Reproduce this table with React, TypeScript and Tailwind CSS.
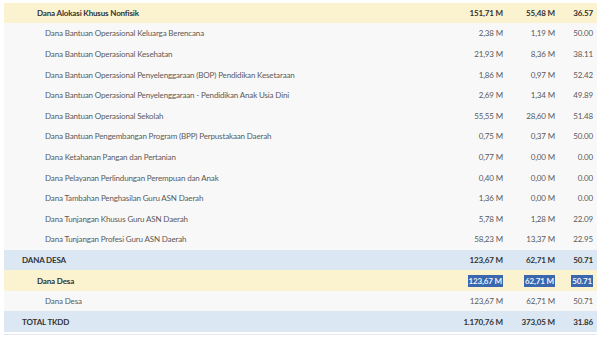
type Row = {
  name: string
  a: string
  b: string
  c: string
  kind: 'group' | 'sub' | 'item'
  selected?: boolean
}

const rows: Row[] = [
  { name: 'Dana Alokasi Khusus Nonfisik', a: '151,71 M', b: '55,48 M', c: '36.57', kind: 'sub' },
  { name: 'Dana Bantuan Operasional Keluarga Berencana', a: '2,38 M', b: '1,19 M', c: '50.00', kind: 'item' },
  { name: 'Dana Bantuan Operasional Kesehatan', a: '21,93 M', b: '8,36 M', c: '38.11', kind: 'item' },
  { name: 'Dana Bantuan Operasional Penyelenggaraan (BOP) Pendidikan Kesetaraan', a: '1,86 M', b: '0,97 M', c: '52.42', kind: 'item' },
  { name: 'Dana Bantuan Operasional Penyelenggaraan - Pendidikan Anak Usia Dini', a: '2,69 M', b: '1,34 M', c: '49.89', kind: 'item' },
  { name: 'Dana Bantuan Operasional Sekolah', a: '55,55 M', b: '28,60 M', c: '51.48', kind: 'item' },
  { name: 'Dana Bantuan Pengembangan Program (BPP) Perpustakaan Daerah', a: '0,75 M', b: '0,37 M', c: '50.00', kind: 'item' },
  { name: 'Dana Ketahanan Pangan dan Pertanian', a: '0,77 M', b: '0,00 M', c: '0.00', kind: 'item' },
  { name: 'Dana Pelayanan Perlindungan Perempuan dan Anak', a: '0,40 M', b: '0,00 M', c: '0.00', kind: 'item' },
  { name: 'Dana Tambahan Penghasilan Guru ASN Daerah', a: '1,36 M', b: '0,00 M', c: '0.00', kind: 'item' },
  { name: 'Dana Tunjangan Khusus Guru ASN Daerah', a: '5,78 M', b: '1,28 M', c: '22.09', kind: 'item' },
  { name: 'Dana Tunjangan Profesi Guru ASN Daerah', a: '58,23 M', b: '13,37 M', c: '22.95', kind: 'item' },
  { name: 'DANA DESA', a: '123,67 M', b: '62,71 M', c: '50.71', kind: 'group' },
  { name: 'Dana Desa', a: '123,67 M', b: '62,71 M', c: '50.71', kind: 'sub', selected: true },
  { name: 'Dana Desa', a: '123,67 M', b: '62,71 M', c: '50.71', kind: 'item' },
  { name: 'TOTAL TKDD', a: '1.170,76 M', b: '373,05 M', c: '31.86', kind: 'group' },
]

const Cell = ({ value, selected }: { value: string; selected?: boolean }) =>
  selected ? (
    <span className="bg-[#3a67ae] px-[1px] py-[1px] text-[#eef3fb]">{value}</span>
  ) : (
    <span>{value}</span>
  )

const App = () => {
  return (
    <div className="h-[337px] w-[600px] overflow-hidden bg-white pl-[4px] pr-[3px] pt-[2.5px] font-['Lato','Noto_Sans',sans-serif] text-[8px] tracking-[-0.15px]">
      <div className="flex flex-col">
        {rows.map((row, i) => {
          const bg =
            row.kind === 'group' ? 'bg-[#dbe8f4]' : row.kind === 'sub' ? 'bg-[#fbf2cf]' : 'bg-[#f8f8f8]'
          const text =
            row.kind === 'item' ? 'font-normal text-[#5a5a5a]' : 'font-bold text-[#333]'
          const indent =
            row.kind === 'group' ? 'pl-[18px]' : row.kind === 'sub' ? 'pl-[33px]' : 'pl-[41px]'
          return (
            <div key={i} className={`flex h-[20.6px] items-center ${bg} ${text}`}>
              <div className={`flex-1 truncate ${indent}`}>{row.name}</div>
              <div className="w-[70px] text-right">
                <Cell value={row.a} selected={row.selected} />
              </div>
              <div className="w-[52px] text-right">
                <Cell value={row.b} selected={row.selected} />
              </div>
              <div className="w-[42px] pr-[4px] text-right">
                <Cell value={row.c} selected={row.selected} />
              </div>
            </div>
          )
        })}
      </div>
      <div className="mt-[2px] border-t border-[#e3e7ec]" />
    </div>
  )
}

export default App
